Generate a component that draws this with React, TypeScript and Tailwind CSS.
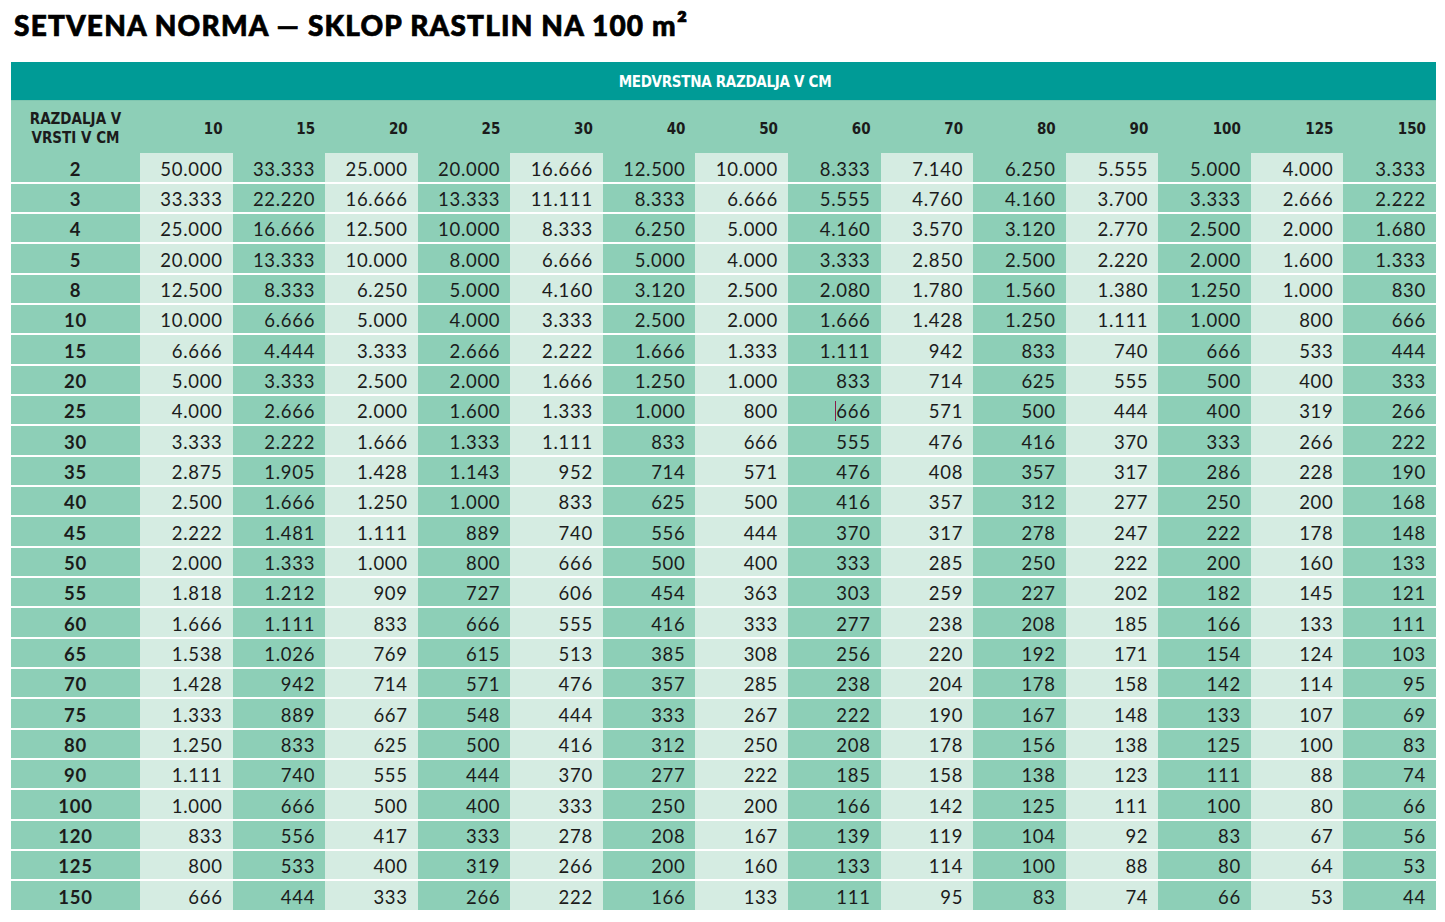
const cols = ['10', '15', '20', '25', '30', '40', '50', '60', '70', '80', '90', '100', '125', '150']

const rows: [string, string[]][] = [
  ['2', ['50.000', '33.333', '25.000', '20.000', '16.666', '12.500', '10.000', '8.333', '7.140', '6.250', '5.555', '5.000', '4.000', '3.333']],
  ['3', ['33.333', '22.220', '16.666', '13.333', '11.111', '8.333', '6.666', '5.555', '4.760', '4.160', '3.700', '3.333', '2.666', '2.222']],
  ['4', ['25.000', '16.666', '12.500', '10.000', '8.333', '6.250', '5.000', '4.160', '3.570', '3.120', '2.770', '2.500', '2.000', '1.680']],
  ['5', ['20.000', '13.333', '10.000', '8.000', '6.666', '5.000', '4.000', '3.333', '2.850', '2.500', '2.220', '2.000', '1.600', '1.333']],
  ['8', ['12.500', '8.333', '6.250', '5.000', '4.160', '3.120', '2.500', '2.080', '1.780', '1.560', '1.380', '1.250', '1.000', '830']],
  ['10', ['10.000', '6.666', '5.000', '4.000', '3.333', '2.500', '2.000', '1.666', '1.428', '1.250', '1.111', '1.000', '800', '666']],
  ['15', ['6.666', '4.444', '3.333', '2.666', '2.222', '1.666', '1.333', '1.111', '942', '833', '740', '666', '533', '444']],
  ['20', ['5.000', '3.333', '2.500', '2.000', '1.666', '1.250', '1.000', '833', '714', '625', '555', '500', '400', '333']],
  ['25', ['4.000', '2.666', '2.000', '1.600', '1.333', '1.000', '800', '666', '571', '500', '444', '400', '319', '266']],
  ['30', ['3.333', '2.222', '1.666', '1.333', '1.111', '833', '666', '555', '476', '416', '370', '333', '266', '222']],
  ['35', ['2.875', '1.905', '1.428', '1.143', '952', '714', '571', '476', '408', '357', '317', '286', '228', '190']],
  ['40', ['2.500', '1.666', '1.250', '1.000', '833', '625', '500', '416', '357', '312', '277', '250', '200', '168']],
  ['45', ['2.222', '1.481', '1.111', '889', '740', '556', '444', '370', '317', '278', '247', '222', '178', '148']],
  ['50', ['2.000', '1.333', '1.000', '800', '666', '500', '400', '333', '285', '250', '222', '200', '160', '133']],
  ['55', ['1.818', '1.212', '909', '727', '606', '454', '363', '303', '259', '227', '202', '182', '145', '121']],
  ['60', ['1.666', '1.111', '833', '666', '555', '416', '333', '277', '238', '208', '185', '166', '133', '111']],
  ['65', ['1.538', '1.026', '769', '615', '513', '385', '308', '256', '220', '192', '171', '154', '124', '103']],
  ['70', ['1.428', '942', '714', '571', '476', '357', '285', '238', '204', '178', '158', '142', '114', '95']],
  ['75', ['1.333', '889', '667', '548', '444', '333', '267', '222', '190', '167', '148', '133', '107', '69']],
  ['80', ['1.250', '833', '625', '500', '416', '312', '250', '208', '178', '156', '138', '125', '100', '83']],
  ['90', ['1.111', '740', '555', '444', '370', '277', '222', '185', '158', '138', '123', '111', '88', '74']],
  ['100', ['1.000', '666', '500', '400', '333', '250', '200', '166', '142', '125', '111', '100', '80', '66']],
  ['120', ['833', '556', '417', '333', '278', '208', '167', '139', '119', '104', '92', '83', '67', '56']],
  ['125', ['800', '533', '400', '319', '266', '200', '160', '133', '114', '100', '88', '80', '64', '53']],
  ['150', ['666', '444', '333', '266', '222', '166', '133', '111', '95', '83', '74', '66', '53', '44']],
]

const grid = 'grid grid-cols-[129px_repeat(14,1fr)]'
const cond = "font-['Liberation_Sans_Narrow','DejaVu_Sans_Condensed',sans-serif]"

// Sowing rate table: plants per 100 m² by in-row and between-row spacing.
export default function App() {
  return (
    <div className="bg-white w-[1445px] h-[922px] overflow-hidden text-[#1b1b1b]">
      <h1 className="pl-[14px] pt-[4px] h-[62px] font-['Lato',sans-serif] font-black text-[28px] tracking-[1.2px] text-black [-webkit-text-stroke:0.7px_black]">
        SETVENA NORMA — SKLOP RASTLIN NA 100 m<span className="text-[30px] leading-none">²</span>
      </h1>
      <div className="ml-[11px] mr-[9px]">
        <div className={`h-[38px] bg-[#009b96] flex items-center justify-center pl-[3px] pt-[3px] text-white font-bold text-[15px] tracking-[-0.3px] ${cond}`}>
          MEDVRSTNA RAZDALJA V CM
        </div>
        <div className={`${grid} h-[53px] bg-[#8dcfb7] border-t border-[#7fc6b0] ${cond} font-bold text-[15px]`}>
          <div className="flex items-center justify-center text-center leading-[19px] pt-[3px]">
            RAZDALJA V<br />VRSTI V CM
          </div>
          {cols.map((c) => (
            <div key={c} className="flex items-center justify-end pr-[10px] pt-[4px]">
              {c}
            </div>
          ))}
        </div>
        <div className="flex flex-col gap-y-[2px]">
          {rows.map(([label, vals], r) => (
            <div
              key={label}
              className={`${grid} ${r % 3 === 0 ? 'h-[29px]' : 'h-[28px]'} font-['Lato',sans-serif] text-[18.5px] leading-[20px]`}
            >
              <div className="bg-[#8dcfb7] flex items-center justify-center pt-[2px] font-bold tracking-[0.8px]">{label}</div>
              {vals.map((v, i) => (
                <div
                  key={i}
                  className={`${i % 2 === 0 ? 'bg-[#d5ece2]' : 'bg-[#8dcfb7]'} flex items-center justify-end pr-[10px] pt-[2px] tracking-[0.7px]`}
                >
                  {label === '25' && i === 7 ? (
                    <span className="border-l border-[#8a1c4a] -ml-px">{v}</span>
                  ) : (
                    v
                  )}
                </div>
              ))}
            </div>
          ))}
        </div>
      </div>
    </div>
  )
}
